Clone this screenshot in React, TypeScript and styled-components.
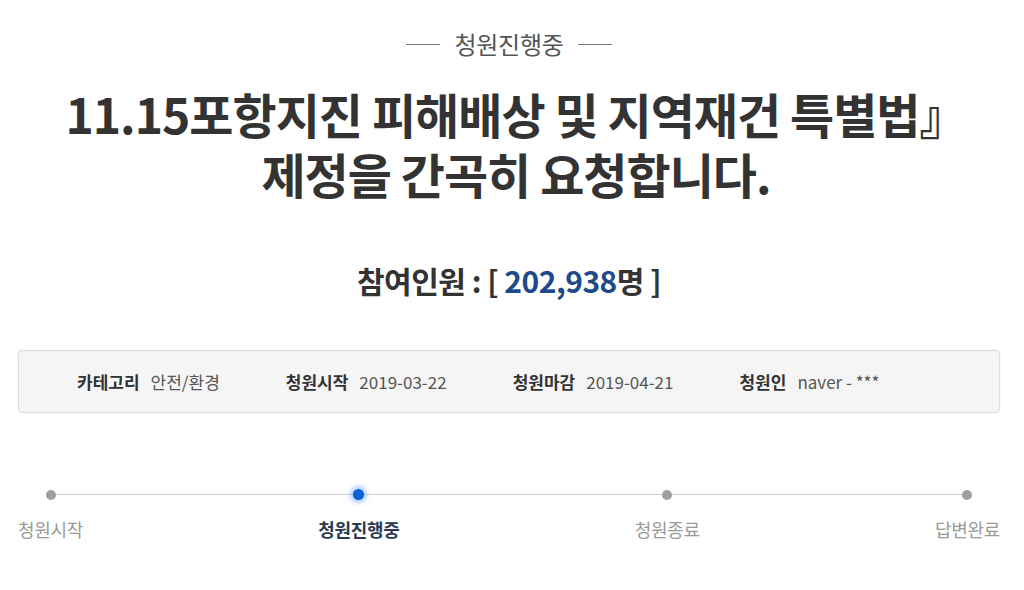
import React from 'react';
import styled, { createGlobalStyle } from 'styled-components';

const GlobalStyle = createGlobalStyle`
  html, body {
    margin: 0;
    padding: 0;
    background: #fff;
    font-family: "Noto Sans CJK KR", "Noto Sans", sans-serif;
    color: #333;
  }
`;

const Page = styled.div`
  width: 1024px;
  height: 590px;
  overflow: hidden;
  padding: 0 24px 0 18px;
  box-sizing: border-box;
`;

const Status = styled.div`
  display: flex;
  align-items: center;
  justify-content: center;
  gap: 15px;
  padding-top: 28px;
  font-size: 24px;
  color: #555;
  line-height: 32px;
  letter-spacing: -0.3px;

  &::before,
  &::after {
    content: '';
    width: 34px;
    height: 1px;
    background: #777;
  }
`;

const Title = styled.h1`
  margin: 23px 0 0;
  padding-left: 14px;
  text-align: center;
  font-size: 48px;
  font-weight: 700;
  letter-spacing: -1px;
  line-height: 60px;
  color: #333;
`;

const Count = styled.div`
  margin-top: 57px;
  text-align: center;
  font-size: 30px;
  font-weight: 700;
  color: #333;
  letter-spacing: -0.5px;
  line-height: 40px;
`;

const Number = styled.span`
  color: #1d4a8a;
`;

const InfoBox = styled.ul`
  list-style: none;
  margin: 50px 0 0;
  padding: 0 0 0 58px;
  height: 61px;
  display: flex;
  align-items: center;
  gap: 66px;
  background: #f5f5f5;
  border: 1px solid #dcdcdc;
  border-radius: 4px;
  box-shadow: 0 0 2px rgba(0, 0, 0, 0.08);
`;

const InfoItem = styled.li`
  display: flex;
  align-items: center;
  gap: 11px;
  font-size: 17px;
  letter-spacing: 0;
`;

const InfoLabel = styled.strong`
  font-weight: 700;
  color: #333;
`;

const InfoValue = styled.span`
  color: #555;
`;

const Steps = styled.ol`
  list-style: none;
  margin: 74px 0 0;
  padding: 0;
  display: flex;
  justify-content: space-between;
  position: relative;

  &::before {
    content: '';
    position: absolute;
    left: 32px;
    right: 32px;
    top: 7px;
    height: 1px;
    background: #cfcfcf;
  }
`;

const Step = styled.li`
  position: relative;
  display: flex;
  flex-direction: column;
  align-items: center;
  gap: 17px;
`;

const Dot = styled.span<{ $active?: boolean }>`
  width: ${(p) => (p.$active ? 11 : 10)}px;
  height: ${(p) => (p.$active ? 11 : 10)}px;
  margin-top: ${(p) => (p.$active ? 2 : 2.5)}px;
  border-radius: 50%;
  background: ${(p) => (p.$active ? '#0b63d1' : '#a0a0a0')};
  box-shadow: ${(p) => (p.$active ? '0 0 4px 3px rgba(70, 150, 255, 0.45)' : 'none')};
`;

const StepLabel = styled.span<{ $active?: boolean }>`
  font-size: 18px;
  letter-spacing: -0.3px;
  line-height: 24px;
  font-weight: ${(p) => (p.$active ? 700 : 400)};
  color: ${(p) => (p.$active ? '#2b3a52' : '#9a9a9a')};
`;

const info = [
  { label: '카테고리', value: '안전/환경' },
  { label: '청원시작', value: '2019-03-22' },
  { label: '청원마감', value: '2019-04-21' },
  { label: '청원인', value: 'naver - ***' },
];

const steps = ['청원시작', '청원진행중', '청원종료', '답변완료'];
const current = 1;

const App: React.FC = () => {
  return (
    <>
      <GlobalStyle />
      <Page>
        <Status>청원진행중</Status>
        <Title>
          11.15포항지진 피해배상 및 지역재건 특별법』
          <br />
          제정을 간곡히 요청합니다.
        </Title>
        <Count>
          참여인원 : [ <Number>202,938</Number>명 ]
        </Count>
        <InfoBox>
          {info.map((item) => (
            <InfoItem key={item.label}>
              <InfoLabel>{item.label}</InfoLabel>
              <InfoValue>{item.value}</InfoValue>
            </InfoItem>
          ))}
        </InfoBox>
        <Steps>
          {steps.map((step, i) => (
            <Step key={step}>
              <Dot $active={i === current} />
              <StepLabel $active={i === current}>{step}</StepLabel>
            </Step>
          ))}
        </Steps>
      </Page>
    </>
  );
};

export default App;
